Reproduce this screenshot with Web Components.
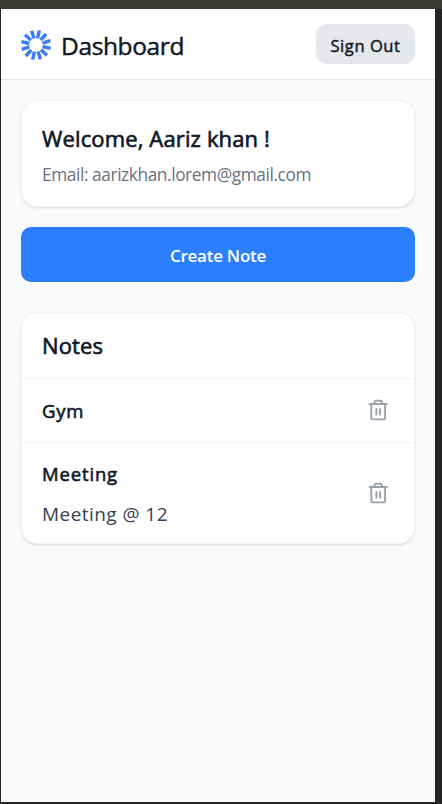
<!DOCTYPE html>
<html lang="en">
<head>
<meta charset="utf-8">
<title>Dashboard</title>
<style>
html,body{margin:0;height:100%}
body{background:#222522;font-family:"Open Sans","Noto Sans",sans-serif;color:#101828;overflow:hidden}
</style>
</head>
<body>
<notes-dashboard></notes-dashboard>
<script>
const define = (name, html, setup) => customElements.define(name, class extends HTMLElement {
  constructor() {
    super();
    this.attachShadow({mode: 'open'}).innerHTML = html;
    if (setup) setup(this.shadowRoot);
  }
});

// A single line of text, tracked to the width in its width attribute.
customElements.define('text-line', class extends HTMLElement {
  connectedCallback() {
    if (this.shadowRoot) return;
    this.attachShadow({mode: 'open'}).innerHTML = `<style>:host{display:block;width:max-content;white-space:nowrap}</style><slot></slot>`;
    const w = parseFloat(this.getAttribute('width'));
    const n = this.textContent.length;
    const own = this.getBoundingClientRect().width;
    if (w && n) this.style.letterSpacing = ((w - own) / n) + 'px';
  }
});

define('burst-logo', `<style>:host{display:block;width:30px;height:30px}svg{display:block}</style>
<svg width="30" height="30" viewBox="-15 -15 30 30" stroke="#3b7cfb" stroke-width="3.4"></svg>`, root => {
  let d = '';
  for (let i = 0; i < 12; i++) {
    const a = (13 + i * 30) * Math.PI / 180, s = Math.sin(a), c = -Math.cos(a);
    d += `M${(s * 6.8).toFixed(2)} ${(c * 6.8).toFixed(2)}L${(s * 15).toFixed(2)} ${(c * 15).toFixed(2)}`;
  }
  root.querySelector('svg').innerHTML = `<path d="${d}"/>`;
});

define('trash-icon', `<style>:host{display:block;width:25px;height:25px}svg{display:block}</style>
<svg width="25" height="25" viewBox="0 0 25 25" fill="none" stroke="#99a1af" stroke-width="1.9" stroke-linecap="round" stroke-linejoin="round"><path d="M3.6 6h17.2M5.3 6v14.2q0 1.2 1.2 1.2h11.4q1.2 0 1.2-1.2V6M8.5 6V4.6q0-1.8 1.8-1.8h3.8q1.8 0 1.8 1.8V6M10.4 11v5.6M14 11v5.6"/></svg>`);

define('surface-card', `<style>:host{display:block;box-sizing:border-box;background:#fff;border:1px solid #f3f4f6;border-radius:16px;box-shadow:0 1px 3px rgba(0,0,0,.1),0 1px 2px -1px rgba(0,0,0,.1)}</style><slot></slot>`);

define('note-row', `<style>
:host{display:flex;box-sizing:border-box;align-items:center;justify-content:space-between;padding:0 23px 0 20px;border-top:1px solid #f3f4f6}
</style><div><slot></slot></div><trash-icon></trash-icon>`);

define('notes-dashboard', `<style>
:host{display:flex;flex-direction:column;box-sizing:border-box;height:804px;width:442px;padding:9px 7px 2px 1px;background:linear-gradient(#373b34 0 9px,#222522 9px)}
header{display:flex;flex:none;box-sizing:border-box;height:71px;align-items:center;background:#fff;border-bottom:1px solid #e5e7eb;padding:0 20px}
burst-logo{margin-top:2px}
h1{margin:0 0 0 10px;font-size:24.5px;font-weight:400;line-height:34px;padding-top:3px;-webkit-text-stroke:.45px}
.out{margin-left:auto;box-sizing:border-box;width:99px;height:40px;border:0;border-radius:10px;background:#e5e7eb;color:#101828;font:400 16.5px/24px "Open Sans","Noto Sans",sans-serif;-webkit-text-stroke:.45px;padding:3px 0 0;display:flex;align-items:center;justify-content:center}
main{flex:1;background:#f9fafb;padding:20px;display:flex;flex-direction:column}
.hello{height:107px;padding:21px 20px}
h2{margin:0;font-size:22px;font-weight:400;line-height:32px;-webkit-text-stroke:.65px}
.mail{font-size:17.3px;line-height:24px;margin-top:9px;color:#6a7282}
.create{margin:20px 0 30px;height:55px;border:0;border-radius:10px;background:#2b7fff;color:#fff;font:600 17px/24px "Open Sans","Noto Sans",sans-serif;padding:2px 0 0;display:flex;align-items:center;justify-content:center}
.notes h2{padding:16px 20px 17px}
h3{margin:0;font-size:18.5px;font-weight:400;line-height:28px;-webkit-text-stroke:.6px}
p{margin:0;font-size:19px;line-height:28px;color:#364153}
note-row:nth-of-type(1){height:64px}
note-row:nth-of-type(2){height:101px}
note-row:nth-of-type(2) h3{padding-top:1px}
note-row p{margin-top:12px}
</style>
<header><burst-logo></burst-logo><h1><text-line width="123">Dashboard</text-line></h1><button class="out"><text-line width="70">Sign Out</text-line></button></header>
<main>
<surface-card class="hello"><h2><text-line width="228">Welcome, Aariz khan !</text-line></h2><div class="mail"><text-line width="269">Email: aarizkhan.lorem@gmail.com</text-line></div></surface-card>
<button class="create"><text-line width="96">Create Note</text-line></button>
<surface-card class="notes"><h2><text-line width="61">Notes</text-line></h2>
<note-row><h3><text-line width="42">Gym</text-line></h3></note-row>
<note-row><h3><text-line width="76">Meeting</text-line></h3><p><text-line width="126">Meeting @ 12</text-line></p></note-row>
</surface-card>
</main>`);
</script>
</body>
</html>
